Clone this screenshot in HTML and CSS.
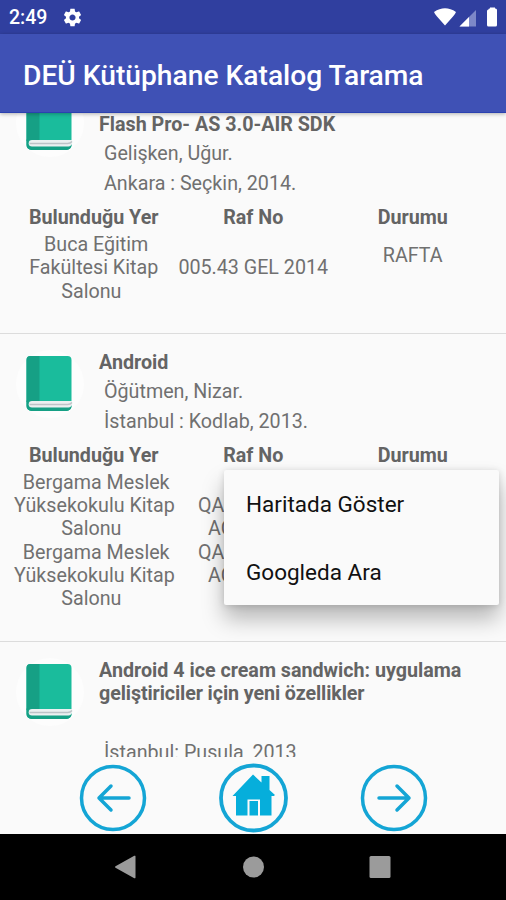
FILE: index.html
```html
<!DOCTYPE html>
<html lang="tr">
<head>
<meta charset="utf-8">
<title>DEÜ Kütüphane Katalog Tarama</title>
<link rel="stylesheet" href="styles.css">
</head>
<body>
<svg class="defs" width="0" height="0">
  <symbol id="book" viewBox="0 0 70 70">
    <circle cx="35" cy="35" r="34" fill="#fdfdfd"/>
    <path d="M15.500 7h37a4 4 0 0 1 4 4v46a5 5 0 0 1-5 5h-35a5 5 0 0 1-5-5v-46a4 4 0 0 1 4-4z" fill="#1abc9c"/>
    <path d="M15.500 7h9v46h-13v-42a4 4 0 0 1 4-4z" fill="#16a085"/>
    <path d="M11.500 51.500v5.500a5 5 0 0 0 5 5h35a5 5 0 0 0 5-5z" fill="#16a085"/>
    <path d="M57 52H17a3.200 3.200 0 0 0 0 6.600h36.500q2.500 0 3.500-3z" fill="#ecf0f1"/>
    <path d="M14.500 55.500h38q3 0 4.500-2" fill="none" stroke="#bdc3c7" stroke-width="1.300"/>
  </symbol>
</svg>
<div class="screen">
  <header class="status">
    <span class="clock">2:49</span>
    <svg class="gear" viewBox="0 0 24 24"><path fill="#fff" d="M19.430 12.980c.040-.320.070-.640.070-.980s-.030-.660-.070-.980l2.110-1.650c.190-.150.240-.420.120-.640l-2-3.460c-.120-.220-.390-.300-.610-.220l-2.490 1c-.520-.400-1.080-.730-1.690-.980l-.380-2.650C14.460 2.180 14.250 2 14 2h-4c-.250 0-.460.180-.490.420l-.380 2.650c-.610.250-1.170.590-1.690.980l-2.490-1c-.230-.090-.490 0-.610.220l-2 3.460c-.130.220-.070.490.120.640l2.110 1.650c-.040.320-.070.650-.070.980s.030.660.070.980l-2.110 1.650c-.190.150-.240.420-.120.640l2 3.460c.120.220.390.300.610.220l2.490-1c.520.400 1.080.730 1.690.980l.380 2.650c.030.240.240.420.490.420h4c.250 0 .460-.180.490-.420l.380-2.650c.610-.250 1.170-.590 1.690-.980l2.490 1c.230.090.490 0 .610-.220l2-3.460c.120-.220.070-.490-.120-.640l-2.110-1.650zM12 15.500c-1.930 0-3.500-1.570-3.500-3.500s1.570-3.500 3.500-3.500 3.500 1.570 3.500 3.500-1.570 3.500-3.500 3.500z"/></svg>
    <svg class="signals" viewBox="0 0 66 22">
      <path d="M0 5Q11-2.500 22 5q-1 2.500-3 4.500L11 18.500 3 9.500Q1 7.500 0 5z" fill="#fff"/>
      <path d="M42 3v16.500H25.500z" fill="#7d88c8"/>
      <path d="M35 10v9.500h-9.500z" fill="#fff"/>
      <path d="M54.500 2.500q0-1 1-1H56V.500h5v1h.5q1.500 0 1.500 1.500V18q0 1.500-1.500 1.500h-7Q53 19.500 53 18V4q0-1.500 1.500-1.500z" fill="#fff"/>
    </svg>
  </header>
  <div class="appbar"><h1>DEÜ Kütüphane Katalog Tarama</h1></div>

  <main class="list">
    <article class="item first">
      <div class="top">
        <svg class="book"><use href="#book"/></svg>
        <div class="info">
          <h2><br>Flash Pro- AS 3.0-AIR SDK</h2>
          <p>Gelişken, Uğur.</p>
          <p>Ankara : Seçkin, 2014.</p>
        </div>
      </div>
      <div class="grid">
        <b>Bulunduğu Yer</b><b>Raf No</b><b>Durumu</b>
        <div>&nbsp;Buca Eğitim<br>Fakültesi Kitap<br>Salonu&nbsp;</div>
        <div class="middle">005.43 GEL 2014</div>
        <div class="state">RAFTA</div>
      </div>
    </article>

    <article class="item second">
      <div class="top">
        <svg class="book"><use href="#book"/></svg>
        <div class="info">
          <h2>Android</h2>
          <p>Öğütmen, Nizar.</p>
          <p>İstanbul : Kodlab, 2013.</p>
        </div>
      </div>
      <div class="grid">
        <b>Bulunduğu Yer</b><b>Raf No</b><b>Durumu</b>
        <div>&nbsp;Bergama Meslek<br>Yüksekokulu Kitap<br>Salonu&nbsp;<br>&nbsp;Bergama Meslek<br>Yüksekokulu Kitap<br>Salonu&nbsp;</div>
        <div class="shelf"><span>QA</span><span class="indent">AÖ</span><span>QA</span><span class="indent">AÖ</span></div>
      </div>
      <div class="menu">
        <div>Haritada Göster</div>
        <div>Googleda Ara</div>
      </div>
    </article>

    <article class="item">
      <div class="top">
        <svg class="book"><use href="#book"/></svg>
        <div class="info">
          <h2 class="long">Android 4 ice cream sandwich: uygulama<br><span>geliştiriciler için yeni özellikler</span></h2>
          <p></p>
          <p>İstanbul: Pusula, 2013</p>
        </div>
      </div>
    </article>
  </main>

  <nav class="pager">
    <svg viewBox="0 0 70 70"><g fill="none" stroke="#14a5d5" stroke-width="3.500"><circle cx="35" cy="35" r="31.500"/><path d="M51 35H21M33 23L21 35l12 12" stroke-linecap="round" stroke-linejoin="round"/></g></svg>
    <svg viewBox="0 0 70 70"><circle cx="35.500" cy="35" r="32.500" fill="none" stroke="#14a5d5" stroke-width="3.800"/><path d="M35 11.500L43.500 19.500V13h8v14l5.500 5-1.200 1H53.500v19.500H42V36.500H29.500V52.500H18V33H14.500z" fill="#06aedb"/><path d="M31.500 38h8.500v14.500h-8.500z" fill="#06aedb"/></svg>
    <svg viewBox="0 0 70 70"><g fill="none" stroke="#14a5d5" stroke-width="3.500"><circle cx="35" cy="35" r="31.500"/><path d="M20 35h30M38 23l12 12-12 12" stroke-linecap="round" stroke-linejoin="round"/></g></svg>
  </nav>

  <footer class="system">
    <svg viewBox="0 0 24 24"><path d="M21.500 1.500v21a.8.800 0 0 1-1.200.7L1.500 12.700a.8.800 0 0 1 0-1.400L20.300.8a.8.800 0 0 1 1.200.7z" fill="#9b9b9b"/></svg>
    <svg viewBox="0 0 24 24"><circle cx="12.500" cy="12" r="10.500" fill="#9b9b9b"/></svg>
    <svg viewBox="0 0 24 24"><rect x="1.500" y="1" width="21" height="22" rx="1.500" fill="#9b9b9b"/></svg>
  </footer>
</div>
</body>
</html>
```

FILE: styles.css
```css
* { box-sizing: border-box; }
body { margin: 0; font-family: Roboto, sans-serif; background: #fafafa; }
.defs { position: absolute; }
.screen { width: 506px; height: 900px; display: flex; flex-direction: column; overflow: hidden; }
.status { height: 34px; flex: none; background: #303f9f; display: flex; align-items: center; padding: 1px 6px 0 9px; }
.clock { color: #fff; font-size: 19.500px; font-weight: 500; width: 53px; }
.gear { width: 21px; height: 21px; }
.signals { width: 66px; height: 22px; margin-left: auto; }
.appbar { height: 79px; flex: none; background: #3f51b5; border-bottom: 1px solid #2b41b0; box-shadow: 0 1px 4px rgba(0,0,0,.3); display: flex; align-items: center; padding: 5px 0 0 23px; position: relative; z-index: 1; }
h1 { margin: 0; color: #fff; font-size: 28.200px; line-height: 34px; font-weight: 500; white-space: nowrap; }
.list { height: 644px; flex: none; overflow: hidden; color: #707070; font-size: 19.700px; line-height: 23.200px; }
.item { height: 308px; border-bottom: 1px solid #dcdcdc; padding-top: 17px; position: relative; }
.item.first { height: 260px; margin-top: -39px; padding-top: 16px; }
.top { display: flex; }
.book { width: 70px; height: 70px; margin: -2px 0 0 15px; flex: none; }
.info { margin-left: 14px; white-space: nowrap; }
h2 { margin: 0 0 3px; font-size: 19.700px; line-height: 23.200px; font-weight: 700; color: #646464; }
.long span { letter-spacing: -.1px; }
p { margin: 0 0 0 5px; height: 29.300px; line-height: 29.300px; }
.grid { display: grid; grid-template-columns: repeat(3, 159.500px); row-gap: 4px; margin: 8px 0 0 14px; text-align: center; white-space: nowrap; }
.grid b { color: #646464; }
.middle { padding-top: 23px; }
.state { padding-top: 11px; }
.shelf { display: flex; flex-direction: column; text-align: left; padding: 23.200px 0 0 24.500px; }
.indent { padding-left: 10px; }
.menu { position: absolute; left: 224px; top: 136px; width: 275px; height: 135px; background: #fafafa; color: #111; font-size: 22.500px; box-shadow: 0 14px 22px rgba(0,0,0,.27), 0 1px 7px rgba(0,0,0,.14); border-radius: 2px; }
.menu div { height: 67.500px; line-height: 69px; padding-left: 22px; }
.pager { height: 77px; flex: none; display: flex; justify-content: center; align-items: flex-end; gap: 70.500px; padding-bottom: 1px; background: #fafafa; }
.pager svg { width: 70px; height: 70px; }
.system { height: 66px; flex: none; background: #000; display: flex; justify-content: center; align-items: center; gap: 103px; }
.system svg { width: 24px; height: 24px; }
```
